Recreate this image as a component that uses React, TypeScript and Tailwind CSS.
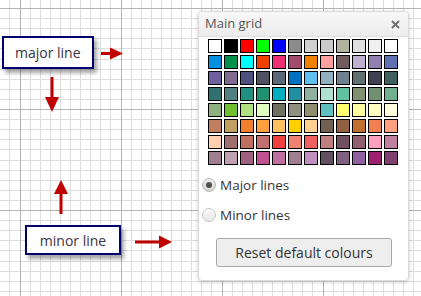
import React from "react";

const palette = [
  ["#ffffff", "#000000", "#ff0000", "#00ff00", "#0000ff", "#8c8c8c", "#d0d0d0", "#cacaca", "#b2b2a0", "#e0e0e0", "#f0f0f0", "#ffffff"],
  ["#0090e0", "#00904c", "#00ffff", "#f04000", "#f02e74", "#a04c6c", "#f08000", "#ffa0a0", "#705c5c", "#c0b0d0", "#9080b0", "#6070b0"],
  ["#7060a0", "#806c90", "#505080", "#505060", "#5c6878", "#0070c0", "#60c0f0", "#90b0c0", "#708090", "#607070", "#404050", "#406060"],
  ["#307070", "#508080", "#209080", "#209070", "#00b0c0", "#2090a0", "#90b0a0", "#b0e0d0", "#60c0a0", "#809070", "#709070", "#70b090"],
  ["#90b080", "#70c030", "#b0e080", "#e0ffc0", "#707060", "#909080", "#909070", "#60c0c0", "#ffff70", "#ffffa0", "#ffffc0", "#ffffe0"],
  ["#c08060", "#c0a060", "#f08030", "#ffa040", "#ffc060", "#ffd000", "#ffd090", "#706050", "#906040", "#c07030", "#f08050", "#ffa080"],
  ["#ffd0b0", "#a07070", "#c07060", "#c07070", "#f04040", "#f08070", "#f06060", "#c08080", "#705060", "#906070", "#ffa0c0", "#c080a0"],
  ["#a08090", "#c0a0b0", "#a06080", "#c05090", "#c070a0", "#a08090", "#c090c0", "#605060", "#806080", "#9060a0", "#a02070", "#804070"],
];

function Grid() {
  const vs: number[] = [];
  for (let k = -2; k < 42; k++) vs.push(k);
  const hs: number[] = [];
  for (let k = 0; k < 30; k++) hs.push(k);
  return (
    <svg className="absolute inset-0" width="421" height="296" shapeRendering="crispEdges">
      {hs.map((k) => (
        <rect
          key={"h" + k}
          x={0}
          y={Math.round(8 + k * 10.1)}
          width={421}
          height={1}
          fill={k % 10 === 0 ? "#b4b4b4" : "#dedede"}
        />
      ))}
      {vs.map((k) => (
        <rect
          key={"v" + k}
          x={Math.round(19.5 + k * 10.1)}
          y={0}
          width={1}
          height={296}
          fill={k % 10 === 0 ? "#b4b4b4" : "#dedede"}
        />
      ))}
      {hs
        .filter((k) => k % 10 === 0)
        .map((k) => (
          <rect key={"m" + k} x={0} y={Math.round(8 + k * 10.1)} width={421} height={1} fill="#b4b4b4" />
        ))}
    </svg>
  );
}

function Arrows() {
  return (
    <svg className="absolute inset-0" width="421" height="296">
      {/* major line -> right */}
      <rect x="101" y="52" width="11" height="3" fill="#c00000" />
      <polygon points="110,47.5 123,53.5 110,59.5" fill="#c00000" />
      {/* major line -> down */}
      <rect x="50.5" y="77" width="3" height="22" fill="#c00000" />
      <polygon points="45,97 59,97 52,112" fill="#c00000" />
      {/* minor line -> up */}
      <rect x="59.5" y="192" width="3" height="22" fill="#c00000" />
      <polygon points="54,194 68,194 61,180" fill="#c00000" />
      {/* minor line -> right */}
      <rect x="135" y="240.5" width="27" height="3" fill="#c00000" />
      <polygon points="159,235.5 172,242 159,248.5" fill="#c00000" />
    </svg>
  );
}

export default function App() {
  return (
    <div className="relative w-[421px] h-[296px] overflow-hidden bg-white font-['Open_Sans',sans-serif]">
      <Grid />
      <Arrows />

      {/* annotation boxes */}
      <div className="absolute left-[2px] top-[36px] w-[92px] h-[33px] flex items-center pl-[11px] bg-white border-2 border-[#00006e] shadow-[3px_4px_4px_rgba(0,0,0,0.35)] text-[14px] text-[#3a3440]">
        major line
      </div>
      <div className="absolute left-[25px] top-[225px] w-[96px] h-[30px] flex items-center justify-center bg-white border-2 border-[#00006e] shadow-[3px_4px_4px_rgba(0,0,0,0.35)] text-[14px] text-[#3a3440]">
        minor line
      </div>

      {/* floating panel */}
      <div className="absolute left-[198px] top-[11px] w-[211px] h-[270px] flex flex-col bg-white border border-[#dadada] rounded-[4px] shadow-[0_1px_4px_rgba(0,0,0,0.2)] overflow-hidden">
        <div className="h-[25px] shrink-0 flex items-center justify-between pl-[6px] pr-[8px] bg-gradient-to-b from-[#f8f8f8] to-[#ececec] border-b border-[#dcdcdc]">
          <span className="text-[13px] text-[#555555]">Main grid</span>
          <svg width="9" height="9" viewBox="0 0 9 9">
            <path d="M1 1 L8 8 M8 1 L1 8" stroke="#707070" strokeWidth="2" />
          </svg>
        </div>
        <div className="flex flex-col pt-[2px] px-[9px]">
          <div className="grid grid-cols-[repeat(12,14px)] gap-[2px]">
            {palette.flat().map((c, i) => (
              <div key={i} className="w-[14px] h-[14px] border-[1.5px] border-black" style={{ backgroundColor: c }} />
            ))}
          </div>
          <div className="flex items-center gap-[4px] mt-[13px] h-[14px] -ml-[6px]">
            <div className="w-[14px] h-[14px] rounded-full border border-[#b8b8b8] bg-gradient-to-b from-[#f0f0f0] to-[#d4d4d4] flex items-center justify-center">
              <div className="w-[6px] h-[6px] rounded-full bg-[#505050]" />
            </div>
            <span className="text-[13.5px] text-[#333333]">Major lines</span>
          </div>
          <div className="flex items-center gap-[4px] mt-[16px] h-[14px] -ml-[6px]">
            <div className="w-[14px] h-[14px] rounded-full border border-[#c8c8c8] bg-gradient-to-b from-[#fafafa] to-[#e6e6e6]" />
            <span className="text-[13.5px] text-[#333333]">Minor lines</span>
          </div>
          <button className="mt-[16px] ml-[8px] w-[176px] h-[29px] bg-[#eeeeee] border border-[#a8a8a8] rounded-[3px] text-[14px] text-[#333333]">
            Reset default colours
          </button>
        </div>
      </div>
    </div>
  );
}
